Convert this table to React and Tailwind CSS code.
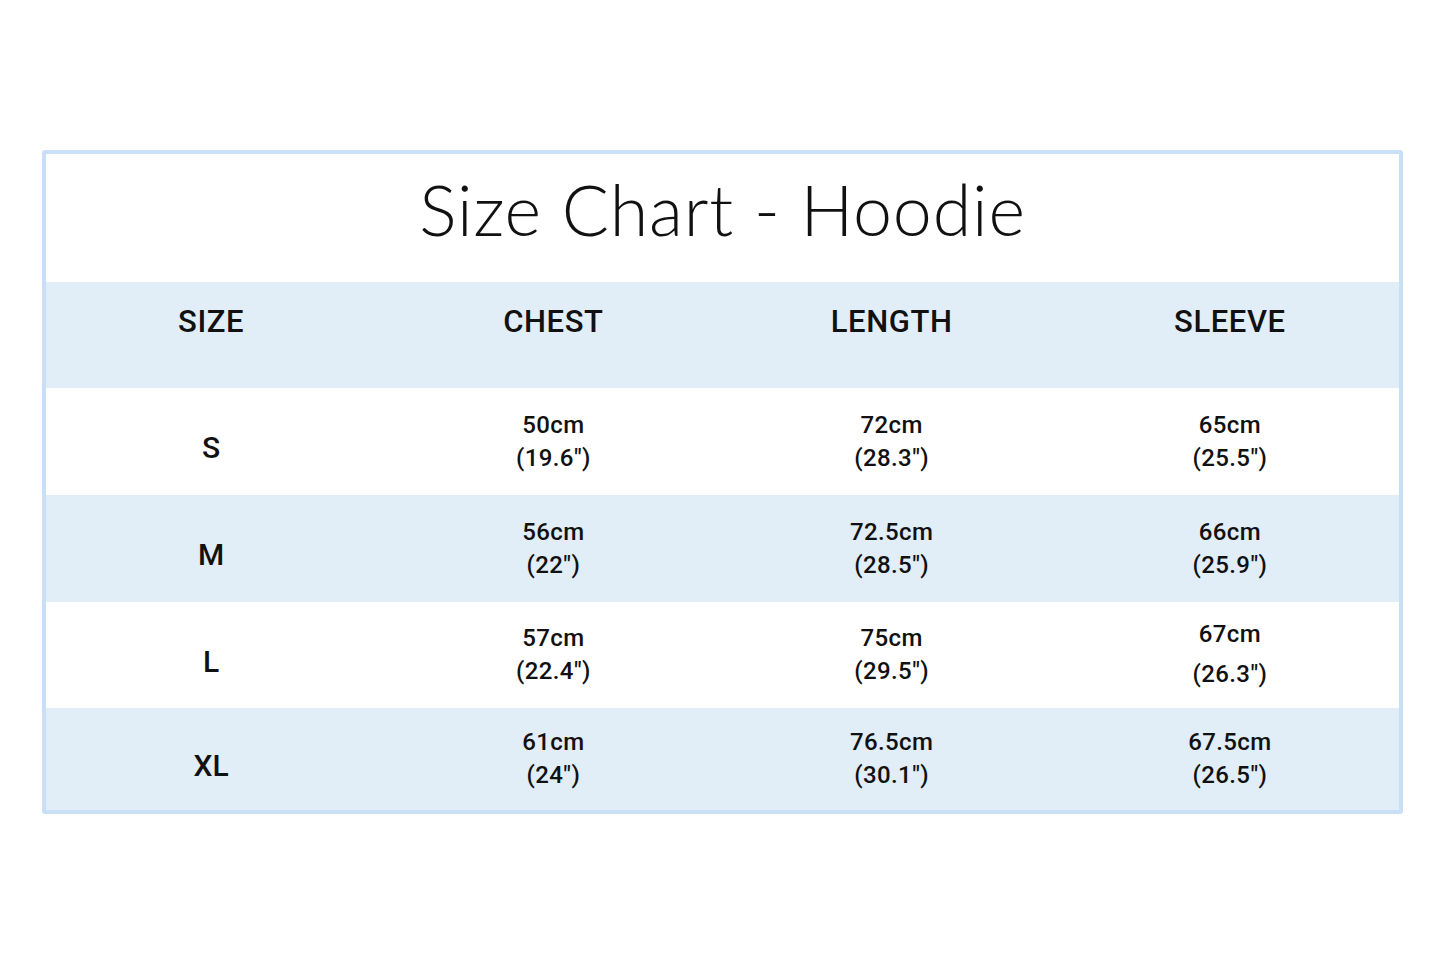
const rows = [
  { size: "S", chest: ["50cm", "(19.6″)"], length: ["72cm", "(28.3″)"], sleeve: ["65cm", "(25.5″)"], h: "h-[107px]", bg: "bg-white" },
  { size: "M", chest: ["56cm", "(22″)"], length: ["72.5cm", "(28.5″)"], sleeve: ["66cm", "(25.9″)"], h: "h-[107px]", bg: "bg-[#e1edf7]" },
  { size: "L", chest: ["57cm", "(22.4″)"], length: ["75cm", "(29.5″)"], sleeve: ["67cm", "(26.3″)"], h: "h-[106px]", bg: "bg-white", wideSleeve: true },
  { size: "XL", chest: ["61cm", "(24″)"], length: ["76.5cm", "(30.1″)"], sleeve: ["67.5cm", "(26.5″)"], h: "h-[102px]", bg: "bg-[#e1edf7]" },
];

function Cell({ lines, wide }) {
  return (
    <div className={`flex flex-col items-center justify-center text-[24px] font-medium tracking-[0.4px] ${wide ? "leading-[40px] pb-[2px]" : "leading-[33px]"}`}>
      <span>{lines[0]}</span>
      <span>{lines[1]}</span>
    </div>
  );
}

export default function App() {
  return (
    <div className="w-[1445px] h-[963px] bg-white pt-[150px] pl-[42px]" style={{ fontFamily: "Roboto, 'Noto Sans', sans-serif" }}>
      <div className="w-[1361px] border-[4.5px] border-[#c8dff5] rounded-[3px] text-[#111]">
        {/* Title */}
        <div className="h-[128px] flex items-center justify-center pb-[18px]">
          <h1 className="text-[70px] font-light tracking-[0.8px]" style={{ fontFamily: "Lato, Roboto, sans-serif" }}>
            Size Chart - Hoodie
          </h1>
        </div>

        {/* Header */}
        <div className="grid grid-cols-4 h-[106px] bg-[#e1edf7] pt-[22px]">
          {["SIZE", "CHEST", "LENGTH", "SLEEVE"].map((t, i) => (
            <div key={t} className={`text-center text-[31px] leading-[36px] font-medium tracking-[0.6px] ${i === 0 ? "pr-[8px]" : ""}`}>{t}</div>
          ))}
        </div>

        {/* Rows */}
        {rows.map((r) => (
          <div key={r.size} className={`grid grid-cols-4 ${r.h} ${r.bg}`}>
            <div className="flex items-center justify-center text-[30px] font-medium pt-[12px] pr-[8px]">{r.size}</div>
            <Cell lines={r.chest} />
            <Cell lines={r.length} />
            <Cell lines={r.sleeve} wide={r.wideSleeve} />
          </div>
        ))}
      </div>
    </div>
  );
}
